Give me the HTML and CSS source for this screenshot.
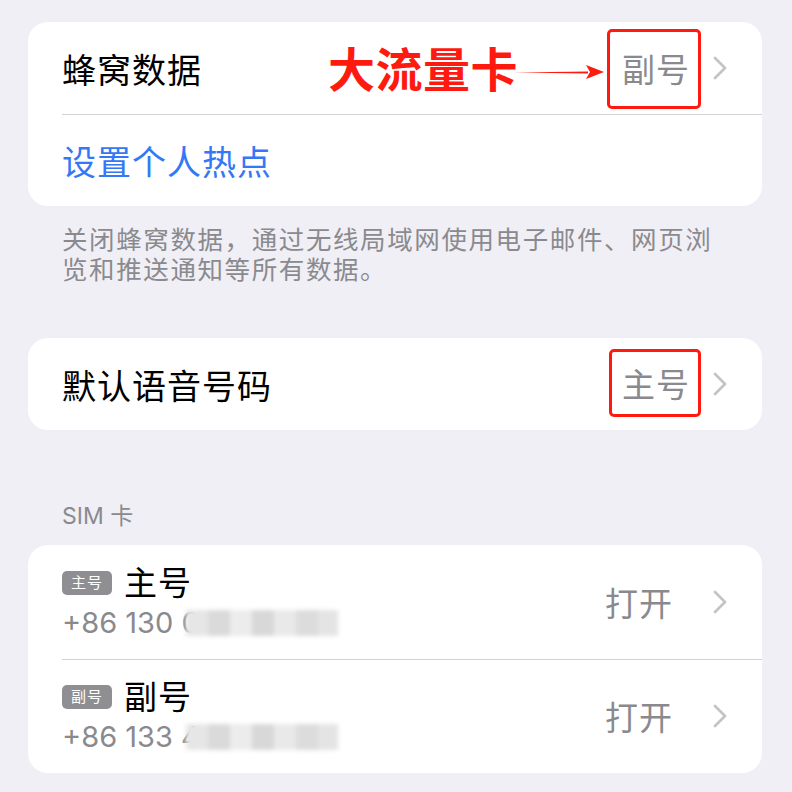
FILE: index.html
```html
<!DOCTYPE html>
<html lang="zh-CN">
<head>
    <meta charset="UTF-8">
    <meta name="viewport" content="width=device-width, initial-scale=1.0">
    <title>蜂窝网络</title>
    <link rel="stylesheet" href="styles.css">
</head>
<body>
    <div class="page">
        <div class="group">
            <div class="row">
                <span class="row-title">蜂窝数据</span>
                <span class="row-value marked">副号</span>
                <svg class="chev" viewBox="0 0 16 26"><path d="M3 3 L13 13 L3 23"/></svg>
                <div class="note">
                    <span class="note-text">大流量卡</span>
                    <svg class="note-arrow" viewBox="0 0 92 16"><path d="M0 8.5 L74 7.5 L74 9.5 Z"/><path d="M72 1 L90 8 L72 15 L76 8 Z"/></svg>
                </div>
            </div>
            <div class="row">
                <span class="row-title link">设置个人热点</span>
            </div>
        </div>
        <p class="footer">关闭蜂窝数据，通过无线局域网使用电子邮件、网页浏览和推送通知等所有数据。</p>

        <div class="group group-voice">
            <div class="row">
                <span class="row-title">默认语音号码</span>
                <span class="row-value marked marked-small">主号</span>
                <svg class="chev" viewBox="0 0 16 26"><path d="M3 3 L13 13 L3 23"/></svg>
            </div>
        </div>

        <div class="header">SIM 卡</div>
        <div class="group">
            <div class="row sim-row">
                <div class="sim-info">
                    <div class="sim-name"><span class="badge">主号</span>主号</div>
                    <div class="sim-phone">+86 130 0<span class="blur">
                        <i class="b1"></i><i class="b2"></i><i class="b3"></i><i class="b4"></i><i class="b5"></i><i class="b6"></i><i class="b7"></i>
                    </span></div>
                </div>
                <span class="row-value">打开</span>
                <svg class="chev" viewBox="0 0 16 26"><path d="M3 3 L13 13 L3 23"/></svg>
            </div>
            <div class="row sim-row">
                <div class="sim-info">
                    <div class="sim-name"><span class="badge">副号</span>副号</div>
                    <div class="sim-phone">+86 133 4<span class="blur">
                        <i class="b1"></i><i class="b2"></i><i class="b3"></i><i class="b4"></i><i class="b5"></i><i class="b6"></i><i class="b7"></i>
                    </span></div>
                </div>
                <span class="row-value">打开</span>
                <svg class="chev" viewBox="0 0 16 26"><path d="M3 3 L13 13 L3 23"/></svg>
            </div>
        </div>
    </div>
</body>
</html>
```
FILE: styles.css
```css
:root {
    --bg: #f0eff5;
    --card: #ffffff;
    --text: #000000;
    --muted: #8a8a8e;
    --chev: #c4c4c7;
    --sep: #d1d1d6;
    --blue: #3478f6;
    --red: #ff1a10;
}

* {
    margin: 0;
    padding: 0;
    box-sizing: border-box;
}

body {
    background: var(--bg);
    font-family: Inter, 'Noto Sans CJK SC', sans-serif;
    color: var(--text);
}

.page {
    padding: 22px 30px 0 28px;
}

.group {
    background: var(--card);
    border-radius: 20px;
    overflow: hidden;
}

.group-voice {
    margin-top: 54px;
}

.row {
    position: relative;
    display: flex;
    align-items: center;
    height: 92px;
    padding: 0 34px;
}

.row + .row::before {
    content: '';
    position: absolute;
    top: 0;
    left: 34px;
    right: 0;
    height: 1px;
    background: var(--sep);
}

.row-title {
    flex: 1;
    font-size: 34px;
    letter-spacing: 1px;
}

.row-title.link {
    color: var(--blue);
}

.row-value {
    font-size: 33px;
    color: var(--muted);
    letter-spacing: 1px;
}

.marked {
    outline: 3px solid var(--red);
    padding: 12px 8px 14px 12px;
    border-radius: 2px;
    margin-right: -10px;
    margin-top: 2px;
}

.marked-small {
    padding: 7px 8px 7px 10px;
    margin-top: -2px;
}

.chev {
    width: 16px;
    height: 26px;
}

.chev path {
    fill: none;
    stroke: var(--chev);
    stroke-width: 2.8;
    stroke-linecap: round;
    stroke-linejoin: round;
}

.row .chev {
    margin-left: 39px;
}

.row .marked + .chev {
    margin-left: 24px;
}

/* annotation over the first row */
.note {
    position: absolute;
    left: 300px;
    top: 22px;
    display: flex;
    align-items: center;
}

.note-text {
    font-size: 47px;
    font-weight: 700;
    color: var(--red);
    line-height: 52px;
    letter-spacing: 0.5px;
}

.note-arrow {
    width: 92px;
    height: 16px;
    margin-left: -4px;
    margin-top: 4px;
}

.note-arrow path {
    fill: var(--red);
}

.footer {
    padding: 0 34px;
    margin-top: 19px;
    font-size: 25.5px;
    line-height: 29.5px;
    color: var(--muted);
    letter-spacing: 1.6px;
}

.header {
    padding: 0 34px;
    margin-top: 72px;
    margin-bottom: 15px;
    font-size: 23px;
    line-height: 28px;
    color: var(--muted);
}

.sim-row {
    height: 114px;
}

.sim-info {
    flex: 1;
    display: flex;
    flex-direction: column;
    gap: 2px;
}

.sim-name {
    display: flex;
    align-items: center;
    font-size: 33px;
    line-height: 40px;
    letter-spacing: 1px;
}

.badge {
    display: inline-block;
    background: #8e8e93;
    color: #fff;
    font-size: 15px;
    line-height: 24px;
    padding: 0 9px;
    border-radius: 5px;
    margin-right: 12px;
    letter-spacing: 1px;
}

.sim-phone {
    display: flex;
    align-items: center;
    font-size: 29px;
    line-height: 36px;
    color: var(--muted);
}

.blur {
    display: inline-flex;
    margin-left: -14px;
    height: 26px;
    filter: blur(2px);
}

.blur i {
    display: block;
    height: 26px;
}

.b1 { width: 22px; background: #e6e6e6; }
.b2 { width: 22px; background: #dadada; }
.b3 { width: 22px; background: #ececec; }
.b4 { width: 22px; background: #d8d8d8; }
.b5 { width: 22px; background: #e9e9e9; }
.b6 { width: 22px; background: #dcdcdc; }
.b7 { width: 20px; background: #e4e4e4; }
```
